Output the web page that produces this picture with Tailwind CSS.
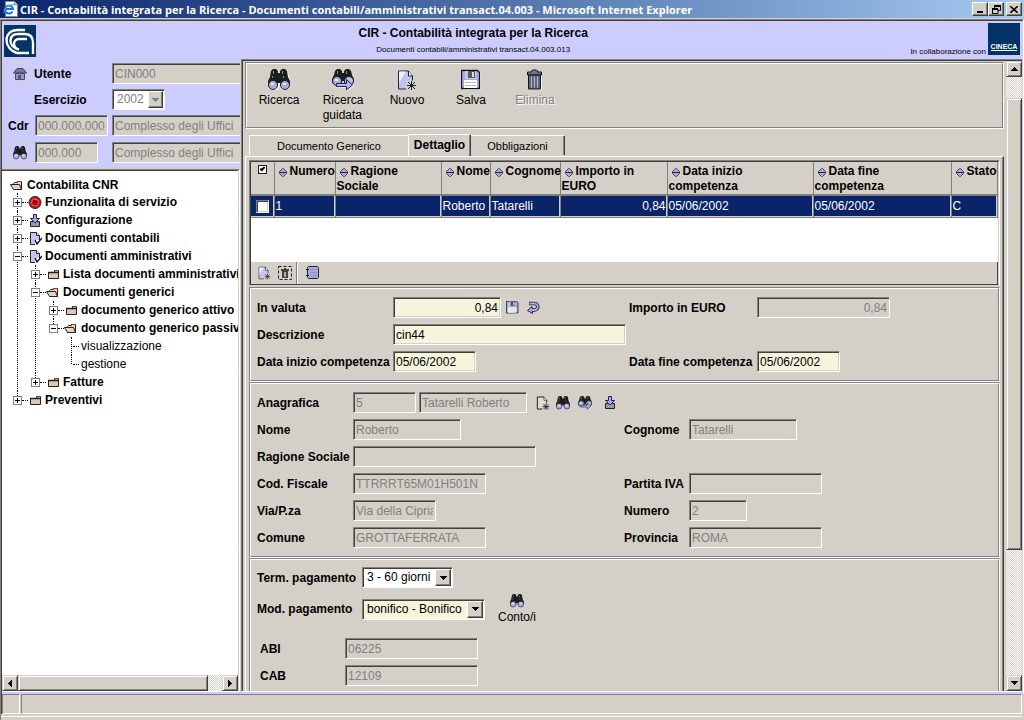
<!DOCTYPE html>
<html lang="it">
<head>
<meta charset="utf-8">
<title>CIR - Contabilità integrata per la Ricerca</title>
<script src="https://cdn.jsdelivr.net/npm/@tailwindcss/browser@4"></script>
</head>
<body class="flex h-screen flex-col overflow-hidden bg-[#d4d0c8] font-['Liberation_Sans',Arial,sans-serif] text-[12px] leading-[15px] text-black [&_input]:shrink-0 [&_input[type=text]]:h-[21px] [&_input[type=text]]:border [&_input[type=text]]:border-t-[#808080] [&_input[type=text]]:border-l-[#808080] [&_input[type=text]]:border-r-white [&_input[type=text]]:border-b-white [&_input[type=text]]:bg-[#f5f5dc] [&_input[type=text]]:px-[2px] [&_input[type=text]]:pt-px [&_input[type=text]]:shadow-[inset_1px_1px_#404040,inset_-1px_-1px_#d4d0c8] [&_input[type=text]:disabled]:bg-[#d4d0c8] [&_input[type=text]:disabled]:text-[#808080] [&_label]:shrink-0 [&_label]:pt-px [&_label]:font-bold [&_label]:whitespace-nowrap">

<!-- icon set -->
<svg class="hidden" aria-hidden="true">
  <symbol id="binoculars" viewBox="0 0 22 22">
    <path d="M6 1h4l2 3h1l2-3h4l1 2 2 8v7l-3 3h-5l-2-3h-1l-2 3H5l-3-3z" fill="#fff" opacity=".8"/>
    <path d="M5 0h3l2 2v2h2V2l2-2h3l2 2 1 6 2 4v5H12v-3h-2v3H0v-5l2-4 1-6z" fill="#1c1c1c"/>
    <path d="M5 2h1v3H5zM14 2h1v3h-1zM4 7h1v2H4zM15 7h1v2h-1z" fill="#8a8a8a"/>
    <circle cx="5" cy="16" r="4.500" fill="#aaaade" stroke="#1c1c2c"/>
    <circle cx="17" cy="16" r="4.500" fill="#aaaade" stroke="#1c1c2c"/>
    <path d="M3 14h3v2H3zM15 14h3v2h-3z" fill="#e8e8ff"/>
  </symbol>
  <symbol id="guided" viewBox="0 0 22 22">
    <path d="M5 0h3l2 2v2h2V2l2-2h3l2 2 1 4 2 4v4H12v-2h-2v2H0v-4l2-4 1-4z" fill="#1c1c1c"/>
    <path d="M5 2h1v3H5zM14 2h1v3h-1z" fill="#8a8a8a"/>
    <circle cx="5" cy="12" r="4.500" fill="#aaaade" stroke="#1c1c2c"/>
    <circle cx="17" cy="12" r="4.500" fill="#c0c0ea" stroke="#1c1c2c"/>
    <path d="M3 10h3v2H3z" fill="#e8e8ff"/>
    <path d="M5 18h10v4l7-6v-1" fill="none" stroke="#fff"/>
    <path d="M4.500 14.500h10v-4l6 5.500-6 5v-3.500h-10z" fill="#b4b4f0" stroke="#222250"/>
  </symbol>
  <symbol id="new" viewBox="0 0 20 21">
    <path d="M1.500 1.500h10l4 5v13h-14z" fill="#c4c4f4" stroke="#222244"/>
    <path d="M2 2h7L2 13z" fill="#eeeeff"/>
    <path d="M11.500 1.500v5h4" fill="#fff" stroke="#222"/>
    <path d="M9 11h11v10H9z" fill="#d4d0c8"/>
    <path d="M14.500 11.500v9M10 16h9M11 12.500l7 7M18 12.500l-7 7" stroke="#222" fill="none"/>
  </symbol>
  <symbol id="newgray" viewBox="0 0 20 21">
    <path d="M1.500 1.500h10l4 5v13h-14z" fill="#deded8" stroke="#222" stroke-width="1.500"/>
    <path d="M11.500 1.500v5h4" fill="#fff" stroke="#222"/>
    <path d="M9 10h11v11H9z" fill="#d4d0c8"/>
    <path d="M14.500 11v10M9.500 16h10M11 12.500l7 7M18 12.500l-7 7" stroke="#222" fill="none" stroke-width="1.300"/>
  </symbol>
  <symbol id="save" viewBox="0 0 20 20">
    <path d="M2 2h18v18H2z" fill="#fff" opacity=".8"/>
    <path d="M.5.500h16l2 2v16H.5z" fill="#aaaae0" stroke="#11112a" stroke-width="1.300"/>
    <path d="M4 1h11v8H4z" fill="#c8c8d8"/><path d="M7 1h7v7H7z" fill="#555566"/><path d="M11 2h2v5h-2z" fill="#ddd"/>
    <path d="M3 10h13v8H3z" fill="#fff"/><path d="M4 12.500h11M4 15.500h11" stroke="#b8b8b0"/>
  </symbol>
  <symbol id="trash" viewBox="0 0 18 21">
    <path d="M3 4h13v16H3z" fill="#fff"/>
    <path d="M5.500 2.500v-1l1-1h4l1 1v1h4v3H1.500v-3z" fill="#777788" stroke="#111122"/>
    <path d="M2.500 5.500h12v14h-12z" fill="#666678" stroke="#111122"/>
    <path d="M5.500 7v11M8.500 7v11M11.500 7v11" stroke="#b4b4cc"/>
  </symbol>
  <symbol id="undo" viewBox="0 0 13 13">
    <path d="M2 2.500h5.500a3.200 3.200 0 0 1 0 6.500H4" fill="none" stroke="#222244" stroke-width="3.600"/>
    <path d="M5 5.500L.5 9.500l5 3z" fill="#aaaae6" stroke="#222244"/>
    <path d="M2.500 2.500h5a3.200 3.200 0 0 1 0 6.500H4" fill="none" stroke="#aaaae6" stroke-width="1.800"/>
  </symbol>
  <symbol id="import" viewBox="0 0 12 13">
    <path d="M1.500 7.500h9v5h-9z" fill="#999" stroke="#222"/>
    <path d="M4.500.5h3v4h3L6 9 1.500 4.500h3z" fill="#aaaaf0" stroke="#222244"/>
  </symbol>
  <symbol id="check-doc" viewBox="0 0 13 13">
    <path d="M1.500.5h6l3 3v9h-9z" fill="#c4c4f4" stroke="#222"/>
    <path d="M7.500.5v3h3" fill="#fff" stroke="#222"/>
    <path d="M6 8h7v5H6z" fill="#fff"/>
    <path d="M6 8l2 4 5-6" fill="none" stroke="#111" stroke-width="1.400"/>
  </symbol>
  <symbol id="folder" viewBox="0 0 13 10">
    <path d="M1.500 3.500h5l2-2h3v8h-10z" fill="#dcc8b4" stroke="#222"/>
    <path d="M1 3.500h11" stroke="#222" stroke-width="1.500"/>
    <path d="M7 1.500h5" stroke="#804040"/>
  </symbol>
  <symbol id="folder-open" viewBox="0 0 13 10">
    <path d="M3.500 3.500l1-1h3l1-1h3v8h-8z" fill="#f4d0c8" stroke="#222"/>
    <path d="M.5 4.500h9l2 5h-8z" fill="#ecd0bc" stroke="#222"/>
    <path d="M7 1.500h5" stroke="#804040"/>
  </symbol>
  <symbol id="sort" viewBox="0 0 8 9">
    <path d="M3.500.5h1l3 3v2l-3 3h-1l-3-3v-2z" fill="#a8a8dc" stroke="#444466"/>
    <path d="M0 4h8v1H0z" fill="#222244"/>
  </symbol>
  <symbol id="up" viewBox="0 0 7 4"><path d="M3 0h1v1h1v1h1v1h1v1H0V3h1V2h1V1h1z"/></symbol>
  <symbol id="down" viewBox="0 0 7 4"><path d="M0 0h7v1H6v1H5v1H4v1H3V3H2V2H1V1H0z"/></symbol>
  <symbol id="left" viewBox="0 0 4 7"><path d="M4 0v7H3V6H2V5H1V4H0V3h1V2h1V1h1V0z"/></symbol>
  <symbol id="right" viewBox="0 0 4 7"><path d="M0 0v7h1V6h1V5h1V4h1V3H3V2H2V1H1V0z"/></symbol>
</svg>

<!-- window title bar -->
<header class="flex h-[18px] shrink-0 items-center bg-gradient-to-r from-[#0a246a] to-[#a6caf0] pr-[2px] pl-[3px]">
  <svg class="mr-[2px] h-4 w-[15px] shrink-0" viewBox="0 0 15 16"><path d="M2.500.5h9l3 3v12h-12z" fill="#fff" stroke="#888"/><path d="M11.500.5v3h3" fill="#ddd" stroke="#888"/><path d="M9.500 10.500A4 4 0 1 1 10 8H3" fill="none" stroke="#1f6fd8" stroke-width="2"/><path d="M1 12C0 8 7 2 12 4" fill="none" stroke="#5aa5f0"/></svg>
  <h1 class="min-w-0 flex-1 truncate font-['Open_Sans',sans-serif] text-[11px] font-bold text-white">CIR - Contabilità integrata per la Ricerca - Documenti contabili/amministrativi transact.04.003 - Microsoft Internet Explorer</h1>
  <div class="flex [&>button]:flex [&>button]:h-[14px] [&>button]:w-4 [&>button]:items-center [&>button]:justify-center [&>button]:border [&>button]:border-t-white [&>button]:border-r-[#404040] [&>button]:border-b-[#404040] [&>button]:border-l-white [&>button]:bg-[#d4d0c8] [&>button]:shadow-[inset_-1px_-1px_#808080]">
    <button aria-label="Riduci"><svg class="h-2 w-2" viewBox="0 0 8 8"><path d="M1 6h6v2H1z"/></svg></button>
    <button aria-label="Ripristina"><svg class="h-[9px] w-[9px]" viewBox="0 0 9 9"><path d="M2.500 3V1h6v4.500h-2M2.500 1h6M.5 4h5.500v4.500H.5z" fill="none" stroke="#000"/><path d="M2 0h7v2H2zM0 3h6v2H0z"/></svg></button>
    <button class="ml-[2px]" aria-label="Chiudi"><svg class="h-[7px] w-2" viewBox="0 0 8 7"><path d="M0 0l8 7M8 0L0 7" stroke="#000" stroke-width="1.600"/></svg></button>
  </div>
</header>

<div class="mt-px flex min-h-0 flex-1 flex-col border-t border-r border-l border-t-[#808080] border-r-white border-l-[#808080]">
<div class="flex min-h-0 flex-1 flex-col border-t border-r border-l border-t-[#404040] border-r-[#d4d0c8] border-l-[#404040]">

  <!-- application header -->
  <div class="flex h-[38px] shrink-0 bg-[#ccccff] pr-[2px] pl-[2px]">
    <svg class="mt-1 h-8 w-8 shrink-0" viewBox="0 0 32 32"><path d="M0 0h32v32H0z" fill="#003366"/><g fill="none" stroke="#fff" stroke-width="2.400"><path d="M21 5H14C6 5 2.500 10 2.500 15S6 26 13 28h12"/><path d="M15 24.500C9 23 6 19 6.500 15S10 9 14 9h7c5 0 8 3 8 9v11"/><path d="M23 14h-8c-3 0-5 2-5 5s1 4 3 5"/></g></svg>
    <div class="flex-1 pt-1 text-center">
      <p class="mt-px font-bold">CIR - Contabilità integrata per la Ricerca</p>
      <p class="mt-[3px] text-[8px] leading-3">Documenti contabili/amministrativi transact.04.003.013</p>
    </div>
    <p class="mt-[25px] mr-[2px] text-[8px] leading-3">In collaborazione con</p>
    <div class="mt-[2px] flex h-8 w-8 items-end justify-center bg-[#003366] pb-1"><span class="border-b border-white text-[7px] leading-[6px] font-bold text-white">CINECA</span></div>
  </div>

  <div class="flex min-h-0 flex-1">
    <!-- left column -->
    <aside class="flex w-[239px] shrink-0 flex-col border-r border-[#d4d0c8]">
      <form class="flex h-[108px] shrink-0 flex-col overflow-hidden bg-[#ccccff] pt-1">
        <div class="mb-[5px] flex shrink-0 items-center">
          <button type="button" aria-label="Home" class="ml-[7px] flex h-[21px] w-[22px] shrink-0 items-center justify-center border border-[#d4d0c8]"><svg class="h-3 w-[14px]" viewBox="0 0 14 12"><path d="M7 .5h3l3.500 4.500H.5L4 .5z" fill="#777799" stroke="#444466"/><path d="M2.500 5.500h9v6h-9z" fill="#9999bb" stroke="#444466"/><path d="M5 7h3v5H5z" fill="#555577"/></svg></button>
          <label for="utente" class="ml-[3px] w-[78px]">Utente</label>
          <input id="utente" type="text" disabled value="CIN000" class="w-[140px]">
        </div>
        <div class="mb-[5px] flex shrink-0 items-center">
          <label for="esercizio" class="ml-8 w-[78px]">Esercizio</label>
          <div class="flex h-[21px] w-[53px] border border-t-[#808080] border-r-white border-b-white border-l-[#808080] bg-white p-px shadow-[inset_1px_1px_#404040]">
            <select id="esercizio" disabled class="w-[34px] appearance-none pl-[3px] text-[#808080] opacity-100"><option>2002</option></select>
            <span class="flex h-[17px] w-[15px] items-center justify-center border border-t-white border-r-[#404040] border-b-[#404040] border-l-white bg-[#d4d0c8] shadow-[inset_-1px_-1px_#808080]"><svg class="h-1 w-[7px] fill-[#808080]"><use href="#down"/></svg></span>
          </div>
        </div>
        <div class="mb-[6px] flex shrink-0 items-center">
          <label for="cdr" class="ml-[6px] w-[27px]">Cdr</label>
          <input id="cdr" type="text" disabled value="000.000.000" class="w-[73px]">
          <input type="text" aria-label="Descrizione Cdr" disabled value="Complesso degli Uffici" class="ml-1 w-[140px]">
        </div>
        <div class="flex shrink-0 items-center">
          <button type="button" aria-label="Cerca" class="mr-1 ml-[7px] flex h-[21px] w-[22px] shrink-0 items-center justify-center border border-[#d4d0c8]"><svg class="h-[14px] w-[14px]"><use href="#binoculars"/></svg></button>
          <input type="text" aria-label="Codice unità" disabled value="000.000" class="w-[63px]">
          <input type="text" aria-label="Descrizione unità" disabled value="Complesso degli Uffici" class="ml-[14px] w-[140px]">
        </div>
      </form>
      <nav class="mt-[2px] flex min-h-0 flex-1 flex-col border-t border-r border-b border-t-[#808080] border-r-white border-b-white">
        <div class="mr-px min-h-0 flex-1 overflow-hidden border-t border-[#404040] bg-white pt-[6px] font-bold whitespace-nowrap [&_button]:z-10 [&_button]:flex [&_button]:h-[9px] [&_button]:w-[9px] [&_button]:shrink-0 [&_button]:items-center [&_button]:justify-center [&_button]:border [&_button]:border-[#808080] [&_button]:bg-white [&_div]:flex [&_div]:h-[18px] [&_div]:items-center [&_i]:w-[6px] [&_i]:shrink-0 [&_i]:border-t [&_i]:border-dotted [&_i]:border-black [&_li]:relative [&_li]:before:absolute [&_li]:before:top-0 [&_li]:before:left-1 [&_li]:before:h-full [&_li]:before:border-l [&_li]:before:border-dotted [&_li]:before:border-black [&_li:last-child]:before:h-[9px] [&_ul_ul]:ml-[18px]">
          <a href="#" class="flex h-4 items-center pl-2"><svg class="mr-1 h-[10px] w-[13px]"><use href="#folder-open"/></svg>Contabilita CNR</a>
          <ul class="ml-[11px]">
            <li><div><button aria-label="Espandi"><svg class="h-[5px] w-[5px]" viewBox="0 0 5 5"><path d="M0 2h5v1H0zM2 0h1v5H2z"/></svg></button><i></i><svg class="mr-[3px] h-[13px] w-[14px]" viewBox="0 0 14 13"><circle cx="7" cy="6.500" r="6" fill="#b01c28" stroke="#402020"/><circle cx="7" cy="6.500" r="3.500" fill="#b00" stroke="#e07070"/></svg><a href="#">Funzionalita di servizio</a></div></li>
            <li><div><button aria-label="Espandi"><svg class="h-[5px] w-[5px]" viewBox="0 0 5 5"><path d="M0 2h5v1H0zM2 0h1v5H2z"/></svg></button><i></i><svg class="mr-[4px] ml-px h-[13px] w-3"><use href="#import"/></svg><a href="#">Configurazione</a></div></li>
            <li><div><button aria-label="Espandi"><svg class="h-[5px] w-[5px]" viewBox="0 0 5 5"><path d="M0 2h5v1H0zM2 0h1v5H2z"/></svg></button><i></i><svg class="mr-[3px] ml-px h-[13px] w-[13px]"><use href="#check-doc"/></svg><a href="#">Documenti contabili</a></div></li>
            <li><div><button aria-label="Comprimi"><svg class="h-[5px] w-[5px]" viewBox="0 0 5 5"><path d="M0 2h5v1H0z"/></svg></button><i></i><svg class="mr-[3px] ml-px h-[13px] w-[13px]"><use href="#check-doc"/></svg><a href="#">Documenti amministrativi</a></div>
              <ul>
                <li><div><button aria-label="Espandi"><svg class="h-[5px] w-[5px]" viewBox="0 0 5 5"><path d="M0 2h5v1H0zM2 0h1v5H2z"/></svg></button><i></i><svg class="mr-[3px] ml-px h-[10px] w-[13px] shrink-0"><use href="#folder"/></svg><a href="#">Lista documenti amministrativi</a></div></li>
                <li><div><button aria-label="Comprimi"><svg class="h-[5px] w-[5px]" viewBox="0 0 5 5"><path d="M0 2h5v1H0z"/></svg></button><i></i><svg class="mr-[4px] h-[10px] w-[13px]"><use href="#folder-open"/></svg><a href="#">Documenti generici</a></div>
                  <ul>
                    <li><div><button aria-label="Espandi"><svg class="h-[5px] w-[5px]" viewBox="0 0 5 5"><path d="M0 2h5v1H0zM2 0h1v5H2z"/></svg></button><i></i><svg class="mr-[3px] ml-px h-[10px] w-[13px] shrink-0"><use href="#folder"/></svg><a href="#">documento generico attivo</a></div></li>
                    <li><div><button aria-label="Comprimi"><svg class="h-[5px] w-[5px]" viewBox="0 0 5 5"><path d="M0 2h5v1H0z"/></svg></button><i></i><svg class="mr-[4px] h-[10px] w-[13px] shrink-0"><use href="#folder-open"/></svg><a href="#">documento generico passivo</a></div>
                      <ul class="font-normal">
                        <li><div><i class="mr-[2px] ml-[6px]"></i><a href="#">visualizzazione</a></div></li>
                        <li><div><i class="mr-[2px] ml-[6px]"></i><a href="#">gestione</a></div></li>
                      </ul>
                    </li>
                  </ul>
                </li>
                <li><div><button aria-label="Espandi"><svg class="h-[5px] w-[5px]" viewBox="0 0 5 5"><path d="M0 2h5v1H0zM2 0h1v5H2z"/></svg></button><i></i><svg class="mr-[3px] ml-px h-[10px] w-[13px]"><use href="#folder"/></svg><a href="#">Fatture</a></div></li>
              </ul>
            </li>
            <li><div><button aria-label="Espandi"><svg class="h-[5px] w-[5px]" viewBox="0 0 5 5"><path d="M0 2h5v1H0zM2 0h1v5H2z"/></svg></button><i></i><svg class="mr-[3px] ml-px h-[10px] w-[13px]"><use href="#folder"/></svg><a href="#">Preventivi</a></div></li>
          </ul>
        </div>
        <div class="mr-px flex h-4 shrink-0 bg-[repeating-conic-gradient(#fff_0_25%,#d4d0c8_0_50%)] bg-[size:2px_2px]">
          <button aria-label="Scorri a sinistra" class="flex w-4 items-center justify-center border border-t-[#d4d0c8] border-r-[#404040] border-b-[#404040] border-l-[#d4d0c8] bg-[#d4d0c8] shadow-[inset_1px_1px_#fff,inset_-1px_-1px_#808080]"><svg class="h-[7px] w-1"><use href="#left"/></svg></button>
          <div class="w-[190px] border border-t-[#d4d0c8] border-r-[#404040] border-b-[#404040] border-l-[#d4d0c8] bg-[#d4d0c8] shadow-[inset_1px_1px_#fff,inset_-1px_-1px_#808080]"></div>
          <button aria-label="Scorri a destra" class="ml-auto flex w-4 items-center justify-center border border-t-[#d4d0c8] border-r-[#404040] border-b-[#404040] border-l-[#d4d0c8] bg-[#d4d0c8] shadow-[inset_1px_1px_#fff,inset_-1px_-1px_#808080]"><svg class="h-[7px] w-1"><use href="#right"/></svg></button>
        </div>
      </nav>
    </aside>

    <!-- right frame -->
    <main class="flex min-w-0 flex-1 border-t border-b border-l border-t-[#808080] border-b-white border-l-[#808080]">
      <div class="flex min-w-0 flex-1 border-t border-l border-[#404040]">
        <div class="flex min-w-0 flex-1 flex-col overflow-hidden pt-px pr-[2px] pl-[2px]">
          <!-- toolbar -->
          <div class="h-[67px] shrink-0 border border-t-[#808080] border-r-white border-b-white border-l-[#808080]">
            <div class="flex h-full items-start border border-t-white border-r-[#808080] border-b-[#808080] border-l-white pt-[5px] [&>button]:flex [&>button]:w-16 [&>button]:flex-col [&>button]:items-center">
              <button><svg class="mb-[2px] h-[22px] w-[22px]"><use href="#binoculars"/></svg>Ricerca</button>
              <button><svg class="mb-[2px] h-[22px] w-[22px]"><use href="#guided"/></svg><span class="text-left">Ricerca<br>guidata</span></button>
              <button><svg class="mb-[2px] h-[22px] w-5"><use href="#new"/></svg>Nuovo</button>
              <button><svg class="mb-[2px] h-[22px] w-5"><use href="#save"/></svg>Salva</button>
              <button disabled class="text-[#808080] [text-shadow:1px_1px_#fff]"><svg class="mb-[2px] h-[22px] w-[18px]"><use href="#trash"/></svg>Elimina</button>
            </div>
          </div>
          <!-- tabs -->
          <div role="tablist" class="mt-[5px] flex h-[22px] shrink-0 items-end pl-1">
            <button role="tab" class="mb-px h-5 w-[159px] border-t border-l border-white pt-px text-[11px]">Documento Generico</button>
            <button role="tab" aria-selected="true" class="h-[22px] w-[63px] border-t border-r border-l border-t-white border-r-[#404040] border-l-white text-[12px] font-bold shadow-[inset_-1px_0_#808080]">Dettaglio</button>
            <button role="tab" class="mb-px h-5 w-[94px] border-t border-r border-t-white border-r-[#404040] pt-px text-[11px] shadow-[inset_-1px_0_#808080]">Obbligazioni</button>
          </div>
          <!-- tab panel -->
          <div class="flex min-h-0 flex-1 flex-col border-t border-r border-l border-t-white border-r-[#404040] border-l-white pt-[3px] pr-[3px] pl-[3px] shadow-[inset_-1px_0_#808080]">
            <section class="flex h-[126px] shrink-0 flex-col border border-t-[#808080] border-r-white border-b-[#d4d0c8] border-l-[#808080]">
              <div class="flex flex-1 flex-col border border-t-[#404040] border-r-[#d4d0c8] border-b-[#404040] border-l-[#404040]">
                <div class="flex-1 bg-white">
                  <table class="w-full table-fixed border-collapse bg-[#d4d0c8] text-left [&_td]:border-r [&_td]:border-b [&_td]:border-[#808080] [&_td]:px-px [&_td]:shadow-[inset_-1px_-1px_#d4d0c8] [&_th]:border-r [&_th]:border-b-2 [&_th]:border-[#808080] [&_th]:p-0 [&_th]:pt-[2px] [&_th]:pl-px [&_th]:align-top">
                    <colgroup><col class="w-[23px]"><col class="w-[61px]"><col class="w-[106px]"><col class="w-[49px]"><col class="w-[70px]"><col class="w-[107px]"><col class="w-[146px]"><col class="w-[138px]"><col></colgroup>
                    <thead><tr class="h-[33px] whitespace-nowrap [&_svg]:mr-[3px] [&_svg]:ml-[3px] [&_svg]:inline-block [&_svg]:h-[9px] [&_svg]:w-2 [&_svg]:align-[-2px]">
                      <th><span class="relative mt-px ml-[6px] block h-[9px] w-[9px]"><input type="checkbox" aria-label="Seleziona tutto" checked class="block h-[9px] w-[9px] appearance-none border border-[#222] bg-white"><span class="pointer-events-none absolute top-px left-[3px] h-[5px] w-[3px] rotate-45 border-r-2 border-b-2 border-black"></span></span></th>
                      <th><svg><use href="#sort"/></svg>Numero</th>
                      <th><svg><use href="#sort"/></svg>Ragione<br>Sociale</th>
                      <th><svg><use href="#sort"/></svg>Nome</th>
                      <th><svg><use href="#sort"/></svg>Cognome</th>
                      <th><svg><use href="#sort"/></svg>Importo in<br>EURO</th>
                      <th><svg><use href="#sort"/></svg>Data inizio<br>competenza</th>
                      <th><svg><use href="#sort"/></svg>Data fine<br>competenza</th>
                      <th><svg><use href="#sort"/></svg>Stato</th>
                    </tr></thead>
                    <tbody><tr class="h-[22px] bg-[#0a246a] whitespace-nowrap text-white">
                      <td><input type="checkbox" aria-label="Seleziona riga 1" class="ml-1 block h-[13px] w-[13px] appearance-none border border-t-[#808080] border-r-white border-b-white border-l-[#808080] bg-white shadow-[inset_1px_1px_#404040,inset_-1px_-1px_#d4d0c8]"></td>
                      <td>1</td><td></td><td>Roberto</td><td>Tatarelli</td><td class="text-right">0,84</td><td>05/06/2002</td><td>05/06/2002</td><td>C</td>
                    </tr></tbody>
                  </table>
                </div>
                <div class="flex h-[22px] shrink-0 items-center border-r border-[#404040] pl-[7px]">
                  <button aria-label="Nuova riga"><svg class="block h-[14px] w-[13px]"><use href="#new"/></svg></button>
                  <button aria-label="Elimina riga" class="ml-[7px]"><svg class="block h-[14px] w-[14px]" viewBox="0 0 14 14"><path d="M.5.5h13v13H.5z" fill="none" stroke="#222" stroke-dasharray="3 2"/><path d="M3 3h8v2H3zM4 5h6v7H4zM6 2h2v1H6z" fill="#444"/><path d="M6 6h2v5H6z" fill="#aaa"/></svg></button>
                  <span class="ml-1 h-full border-r border-l border-r-white border-l-[#808080]"></span>
                  <button aria-label="Dettaglio riga" class="ml-2"><svg class="block h-[14px] w-[14px]" viewBox="0 0 14 14"><path d="M2.500.5h9l1 1v10l-1 1h-9l-1-1v-10z" fill="#aaaae0" stroke="#222244"/><path d="M4 3.500h7M4 6.500h7M4 9.500h7" stroke="#9090c4"/><path d="M0 3h3v1H0zM0 9h3v1H0z" fill="#222"/></svg></button>
                </div>
              </div>
            </section>

            <!-- amounts -->
            <section class="mt-px shrink-0 border border-t-[#808080] border-r-white border-b-white border-l-[#808080]">
              <div class="grid grid-cols-[136px_236px_128px_1fr] items-center gap-y-[6px] border border-t-white border-r-[#808080] border-b-[#808080] border-l-white py-2 pl-[6px]">
                <label for="valuta">In valuta</label>
                <div class="flex items-center"><input id="valuta" type="text" value="0,84" class="w-[108px] text-right"><button aria-label="Salva importo" class="ml-[5px]"><svg class="block h-[13px] w-[13px]"><use href="#save"/></svg></button><button aria-label="Annulla" class="ml-2"><svg class="block h-[13px] w-[13px]"><use href="#undo"/></svg></button></div>
                <label for="euro">Importo in EURO</label>
                <input id="euro" type="text" disabled value="0,84" class="w-[133px] text-right">
                <label for="descrizione">Descrizione</label>
                <input id="descrizione" type="text" value="cin44" class="col-span-3 w-[233px]">
                <label for="inizio">Data inizio competenza</label>
                <input id="inizio" type="text" value="05/06/2002" class="w-[83px]">
                <label for="fine">Data fine competenza</label>
                <input id="fine" type="text" value="05/06/2002" class="w-[83px]">
              </div>
            </section>

            <!-- personal data -->
            <section class="shrink-0 border border-t-[#808080] border-r-white border-b-white border-l-[#808080]">
              <div class="grid grid-cols-[96px_271px_65px_1fr] items-center gap-y-[6px] border border-t-white border-r-[#808080] border-b-[#808080] border-l-white py-2 pl-[6px]">
                <label for="anagrafica">Anagrafica</label>
                <div class="col-span-3 flex items-center"><input id="anagrafica" type="text" disabled value="5" class="w-[63px]"><input type="text" aria-label="Denominazione" disabled value="Tatarelli Roberto" class="ml-[3px] w-[108px]"><button aria-label="Nuova anagrafica" class="ml-[9px]"><svg class="block h-[14px] w-[14px]"><use href="#newgray"/></svg></button><button aria-label="Cerca anagrafica" class="ml-[6px]"><svg class="block h-[14px] w-[14px]"><use href="#binoculars"/></svg></button><button aria-label="Ricerca guidata" class="ml-2"><svg class="block h-[14px] w-[14px]"><use href="#guided"/></svg></button><button aria-label="Importa" class="ml-3"><svg class="block h-[13px] w-3"><use href="#import"/></svg></button></div>
                <label for="nome">Nome</label>
                <input id="nome" type="text" disabled value="Roberto" class="w-[108px]">
                <label for="cognome">Cognome</label>
                <input id="cognome" type="text" disabled value="Tatarelli" class="w-[108px]">
                <label for="ragione">Ragione Sociale</label>
                <input id="ragione" type="text" disabled value="" class="col-span-3 w-[183px]">
                <label for="fiscale">Cod. Fiscale</label>
                <input id="fiscale" type="text" disabled value="TTRRRT65M01H501N" class="w-[133px]">
                <label for="iva">Partita IVA</label>
                <input id="iva" type="text" disabled value="" class="w-[133px]">
                <label for="via">Via/P.za</label>
                <input id="via" type="text" disabled value="Via della Cipriana" class="w-[83px]">
                <label for="numero">Numero</label>
                <input id="numero" type="text" disabled value="2" class="w-[58px]">
                <label for="comune">Comune</label>
                <input id="comune" type="text" disabled value="GROTTAFERRATA" class="w-[133px]">
                <label for="provincia">Provincia</label>
                <input id="provincia" type="text" disabled value="ROMA" class="w-[133px]">
              </div>
            </section>

            <!-- payment -->
            <section class="flex min-h-0 flex-1 flex-col border-t border-r border-l border-t-[#808080] border-r-white border-l-[#808080]">
              <div class="flex-1 overflow-hidden border-t border-r border-l border-t-white border-r-[#808080] border-l-white pt-[7px] pl-[6px]">
                <div class="flex items-center">
                  <label for="term" class="w-[105px]">Term. pagamento</label>
                  <div class="flex h-[21px] w-[91px] border border-t-[#808080] border-r-white border-b-white border-l-[#808080] bg-white p-px shadow-[inset_1px_1px_#404040]">
                    <select id="term" class="w-[71px] appearance-none pl-[3px]"><option>3 - 60 giorni</option></select>
                    <span class="flex h-[17px] w-4 items-center justify-center border border-t-white border-r-[#404040] border-b-[#404040] border-l-white bg-[#d4d0c8] shadow-[inset_-1px_-1px_#808080]"><svg class="h-1 w-[7px]"><use href="#down"/></svg></span>
                  </div>
                </div>
                <div class="mt-[5px] flex h-8 items-center">
                  <label for="mod" class="w-[105px]">Mod. pagamento</label>
                  <div class="flex h-[21px] w-[123px] border border-t-[#808080] border-r-white border-b-white border-l-[#808080] bg-[#f5f5dc] p-px shadow-[inset_1px_1px_#404040]">
                    <select id="mod" class="w-[103px] appearance-none pl-[3px]"><option>bonifico - Bonifico</option></select>
                    <span class="flex h-[17px] w-4 items-center justify-center border border-t-white border-r-[#404040] border-b-[#404040] border-l-white bg-[#d4d0c8] shadow-[inset_-1px_-1px_#808080]"><svg class="h-1 w-[7px]"><use href="#down"/></svg></span>
                  </div>
                  <button class="ml-[13px] flex flex-col items-center"><svg class="mb-[2px] h-[14px] w-[14px]"><use href="#binoculars"/></svg>Conto/i</button>
                </div>
                <div class="mt-[13px] grid grid-cols-[85px_1fr] items-center gap-y-[6px] pl-[3px]">
                  <label for="abi">ABI</label>
                  <input id="abi" type="text" disabled value="06225" class="w-[133px]">
                  <label for="cab">CAB</label>
                  <input id="cab" type="text" disabled value="12109" class="w-[133px]">
                </div>
              </div>
            </section>
          </div>
        </div>
        <!-- vertical scroll bar -->
        <div class="flex w-4 shrink-0 flex-col bg-[repeating-conic-gradient(#fff_0_25%,#d4d0c8_0_50%)] bg-[size:2px_2px]">
          <button aria-label="Scorri in alto" class="flex h-4 shrink-0 items-center justify-center border border-t-[#d4d0c8] border-r-[#404040] border-b-[#404040] border-l-[#d4d0c8] bg-[#d4d0c8] shadow-[inset_1px_1px_#fff,inset_-1px_-1px_#808080]"><svg class="h-1 w-[7px]"><use href="#up"/></svg></button>
          <div class="mt-[21px] mb-[125px] flex-1 border border-t-[#d4d0c8] border-r-[#404040] border-b-[#404040] border-l-[#d4d0c8] bg-[#d4d0c8] shadow-[inset_1px_1px_#fff,inset_-1px_-1px_#808080]"></div>
          <button aria-label="Scorri in basso" class="flex h-4 shrink-0 items-center justify-center border border-t-[#d4d0c8] border-r-[#404040] border-b-[#404040] border-l-[#d4d0c8] bg-[#d4d0c8] shadow-[inset_1px_1px_#fff,inset_-1px_-1px_#808080]"><svg class="h-1 w-[7px]"><use href="#down"/></svg></button>
        </div>
      </div>
    </main>
  </div>
  <div class="h-[2px] shrink-0 bg-[#ccccff]"></div>
</div>
</div>

<!-- status bar -->
<footer class="flex h-[26px] shrink-0 flex-col border-l border-[#808080] pr-[2px]">
  <div class="flex h-5 gap-px border-l border-[#404040]">
    <div class="w-[18px] border border-t-[#808080] border-r-white border-b-white border-l-[#808080]"></div>
    <div class="flex-1 border border-t-[#808080] border-r-white border-b-white border-l-[#808080]"></div>
  </div>
  <div class="mt-[2px] h-px bg-white"></div>
</footer>
</body>
</html>
